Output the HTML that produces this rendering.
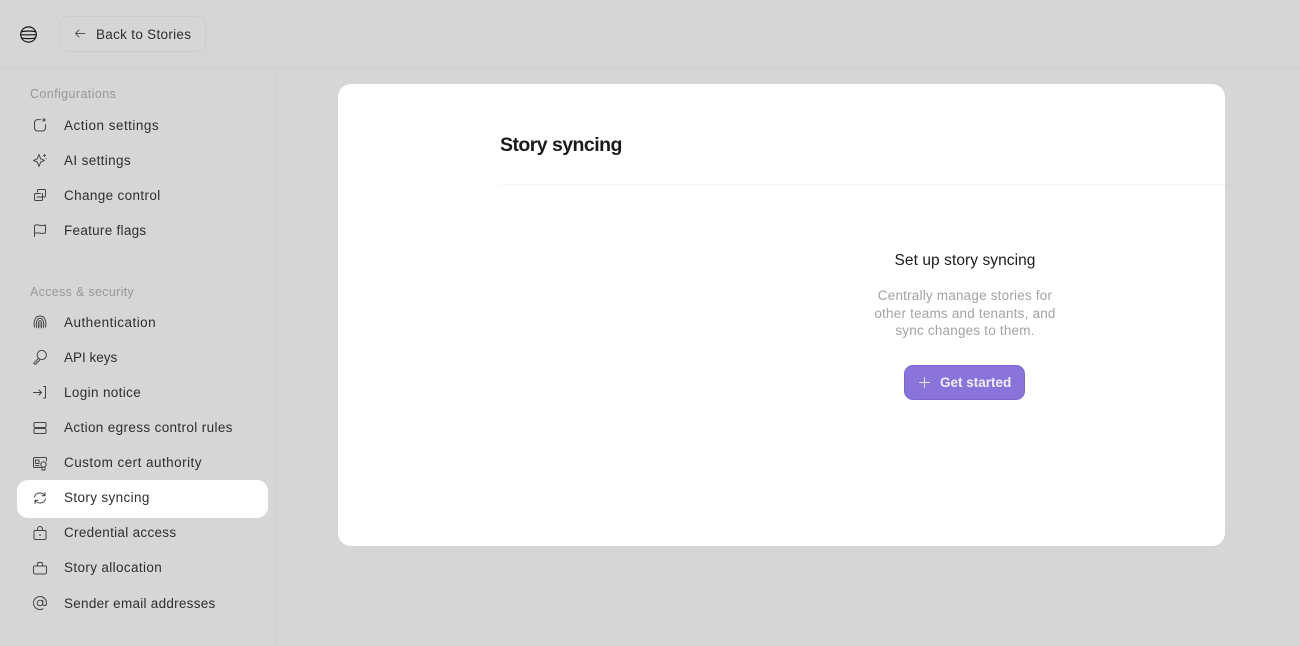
<!DOCTYPE html>
<html lang="en">
<head>
<meta charset="utf-8">
<title>Story syncing</title>
<style>
html,body{margin:0;padding:0}
body{width:1300px;height:646px;overflow:hidden;background:#d6d6d6;position:relative;font-family:"Liberation Sans",sans-serif;color:#2b2b2b}
.abs{position:absolute}
.t{position:absolute;white-space:nowrap;font-size:13.5px;line-height:18px;letter-spacing:.36px;color:#2e2e2e}
.h{position:absolute;white-space:nowrap;font-size:12.5px;line-height:16px;letter-spacing:.4px;color:#979797}
svg.i{position:absolute;left:32px;width:16px;height:16px;fill:none;stroke:#444;stroke-width:1;stroke-linecap:round;stroke-linejoin:round}
</style>
</head>
<body>
<div class="abs" style="left:0;top:68px;width:1300px;height:1px;background:#cfcfcf"></div>
<div class="abs" style="left:275px;top:69px;width:1px;height:577px;background:#cfcfcf"></div>

<svg class="abs" style="left:19px;top:25px" width="19" height="19" viewBox="0 0 19 19" fill="none" stroke="#151515" stroke-width="1.200"><ellipse cx="9.500" cy="9.500" rx="7.800" ry="7.600"/><path d="M2.300 6.800C6 5.700 13 5.700 16.700 6.800M1.800 9.800H17.200M2.300 12.800C6 13.900 13 13.900 16.700 12.800"/></svg>

<div class="abs" style="left:59px;top:16px;width:145px;height:34px;border:1px solid #cdcdcd;border-radius:9px"></div>
<svg class="abs" style="left:74px;top:28px" width="12" height="12" viewBox="0 0 12 12" fill="none" stroke="#555" stroke-width=".9" stroke-linecap="round" stroke-linejoin="round"><path d="M11 5.500H1.500M5 2 1.500 5.500 5 9"/></svg>
<div class="t" style="left:96px;top:25.500px;letter-spacing:.3px">Back to Stories</div>

<div class="h" style="left:30px;top:86px">Configurations</div>
<svg class="i" style="top:117px" viewBox="0 0 16 16"><path d="M8.500 2.600H5.500A3 3 0 0 0 2.500 5.600V11A3 3 0 0 0 5.500 14H10.500A3 3 0 0 0 13.500 11V7.600"/><path d="M12 1.500V4.500M10.500 3H13.500" stroke-width="1.100"/></svg>
<div class="t" style="left:64px;top:116.500px;letter-spacing:.49px">Action settings</div>
<svg class="i" style="top:152px" viewBox="0 0 16 16"><path d="M7 2.500 8.700 6.800 12.500 8.400 8.700 10 7 14.500 5.300 10 1.500 8.400 5.300 6.800Z"/><path d="M12.500 2.500V4.500M11.500 3.500H13.500M14 6.500V6.600"/></svg>
<div class="t" style="left:64px;top:151.500px">AI settings</div>
<svg class="i" style="top:187px" viewBox="0 0 16 16"><path d="M5.500 5V3.500A1 1 0 0 1 6.500 2.500H12.500A1 1 0 0 1 13.500 3.500V9A1 1 0 0 1 12.500 10H10.500"/><path d="M10.500 6.500V12.500A1 1 0 0 1 9.500 13.500H3.500A1 1 0 0 1 2.500 12.500V7.500A1 1 0 0 1 3.500 6.500H8.500M5 10H10.500"/></svg>
<div class="t" style="left:64px;top:186.500px">Change control</div>
<svg class="i" style="top:222px" viewBox="0 0 16 16"><path d="M2.500 14.500V3.500C6 1.500 9 5 13.500 3V11C9 12.500 6 9.500 2.500 11.500"/></svg>
<div class="t" style="left:64px;top:221.500px;letter-spacing:.28px">Feature flags</div>

<div class="h" style="left:30px;top:284px;letter-spacing:.32px">Access &amp; security</div>
<svg class="i" style="top:314px" viewBox="0 0 16 16"><path d="M2.500 13C1.500 8 2.500 2 8 2S14.500 8 13.500 13"/><path d="M4.500 13.500C3.800 9 4.500 4.300 8 4.300S12.200 9 11.500 13.500"/><path d="M6.500 14C6 10.500 6.200 6.600 8 6.600S10 10.500 9.500 14"/><path d="M8 9V13"/></svg>
<div class="t" style="left:64px;top:313.500px;letter-spacing:.47px">Authentication</div>
<svg class="i" style="top:349px" viewBox="0 0 16 16"><circle cx="9.800" cy="6" r="4.600"/><path d="M6.500 9.300 2 13.800V15H4L5 14V12.800H6.300L7.800 10.800"/></svg>
<div class="t" style="left:64px;top:348.500px;letter-spacing:0">API keys</div>
<svg class="i" style="top:384px" viewBox="0 0 16 16"><path d="M1.500 8.500H9.500M7 6 9.500 8.500 7 11M11.500 2.500H13.500V14H11.500"/></svg>
<div class="t" style="left:64px;top:384px">Login notice</div>
<svg class="i" style="top:419.500px" viewBox="0 0 16 16"><rect x="2" y="2.500" width="12" height="5" rx="1.200"/><rect x="2" y="8.500" width="12" height="5" rx="1.200"/></svg>
<div class="t" style="left:64px;top:419px">Action egress control rules</div>
<svg class="i" style="top:454.500px" viewBox="0 0 16 16"><path d="M9 12.500H2.500A1 1 0 0 1 1.500 11.500V3.500A1 1 0 0 1 2.500 2.500H13.500A1 1 0 0 1 14.500 3.500V6"/><rect x="3.500" y="5" width="3.500" height="3.500"/><path d="M3.500 10.500H7"/><circle cx="11.500" cy="9.500" r="2.700"/><path d="M10 12V15H13V12"/></svg>
<div class="t" style="left:64px;top:454px;letter-spacing:.46px">Custom cert authority</div>

<div class="abs" style="left:17px;top:480px;width:251px;height:38px;background:#fff;border-radius:11px"></div>
<svg class="i" style="top:490px" viewBox="0 0 16 16"><path d="M2.500 7C3 4.500 5.200 3 8 3C10 3 11.500 3.800 12.800 5.500M13 2.500V5.700H10"/><path d="M13.500 9C13 11.500 10.800 13 8 13C6 13 4.500 12.200 3.200 10.500M3 13.500V10.300H6"/></svg>
<div class="t" style="left:64px;top:489px">Story syncing</div>
<svg class="i" style="top:524.500px" viewBox="0 0 16 16"><rect x="2" y="5.500" width="12" height="9" rx="1"/><path d="M5.500 5.500V4A2.500 2.500 0 0 1 10.500 4V5.500"/><circle cx="8" cy="10" r=".4" fill="#444"/></svg>
<div class="t" style="left:64px;top:524px;letter-spacing:.3px">Credential access</div>
<svg class="i" style="top:559.500px" viewBox="0 0 16 16"><path d="M2.500 6H13.500A1 1 0 0 1 14.500 7V12.500A1.500 1.500 0 0 1 13 14H3A1.500 1.500 0 0 1 1.500 12.500V7A1 1 0 0 1 2.500 6Z"/><path d="M5 6 6 2.500H10L11 6"/></svg>
<div class="t" style="left:64px;top:559px">Story allocation</div>
<svg class="i" style="top:595px" viewBox="0 0 16 16"><circle cx="8" cy="8" r="2.800"/><path d="M10.800 5.200V9.200A1.900 1.900 0 0 0 14.500 9V8A6.500 6.500 0 1 0 11 13.800"/></svg>
<div class="t" style="left:64px;top:594.500px;letter-spacing:.27px">Sender email addresses</div>

<div class="abs" style="left:338px;top:84px;width:887px;height:462px;background:#fff;border-radius:13px"></div>
<div class="abs" style="left:500px;top:184px;width:725px;height:1px;background:#f6f6f6"></div>
<div class="abs" style="left:1225px;top:184px;width:75px;height:1px;background:#d2d2d2"></div>

<div class="abs" style="left:500px;top:132px;font-size:19.500px;line-height:26px;font-weight:700;letter-spacing:-.55px;color:#1a1a1a;white-space:nowrap">Story syncing</div>
<div class="abs" style="left:765px;width:400px;top:250.500px;text-align:center;font-size:15.500px;line-height:20px;letter-spacing:.07px;color:#1c1c1c;white-space:nowrap">Set up story syncing</div>
<div class="abs" style="left:765px;width:400px;top:287px;text-align:center;font-size:13.500px;line-height:17.500px;letter-spacing:.2px;color:#a3a3a3;white-space:nowrap">Centrally manage stories for<br>other teams and tenants, and<br>sync changes to them.</div>

<div class="abs" style="left:904px;top:365px;width:121px;height:35px;box-sizing:border-box;background:#8a74dc;border:1px solid #7d66d3;border-radius:9px"></div>
<svg class="abs" style="left:918px;top:376px" width="13" height="13" viewBox="0 0 13 13" fill="none" stroke="#e9e4fa" stroke-width="1" stroke-linecap="round"><path d="M6.500 1.500V11.500M1.500 6.500H11.500"/></svg>
<div class="abs" style="left:940px;top:374px;font-size:13.500px;line-height:18px;font-weight:700;letter-spacing:0;color:#f0edfb;white-space:nowrap">Get started</div>
</body>
</html>
